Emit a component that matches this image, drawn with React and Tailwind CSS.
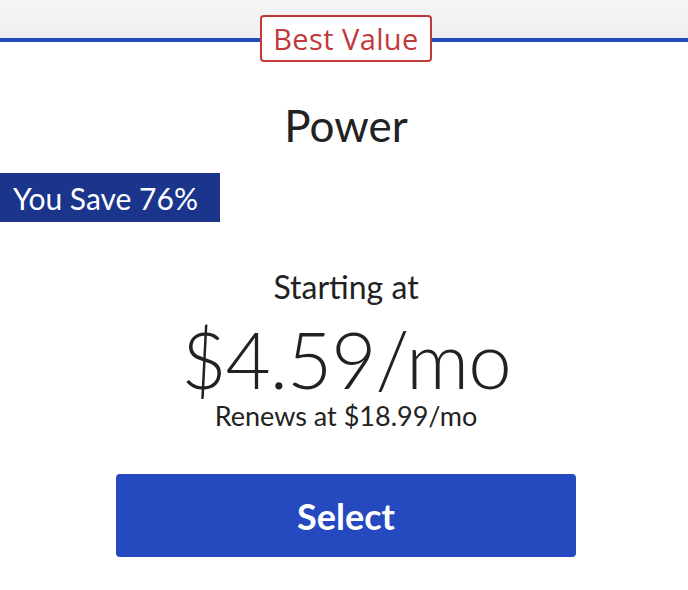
export default function App() {
  return (
    <div className="w-[688px] h-[590px] bg-white overflow-hidden text-[#222222]" style={{ fontFamily: "Lato, 'Open Sans', sans-serif" }}>
      <div className="h-[38px] bg-gradient-to-b from-[#f5f5f5] to-[#efefef]" />
      <div className="relative border-t-4 border-[#2549be]">
        <div className="absolute left-[260px] top-[-27px] h-[47px] w-[172px] flex items-center justify-center bg-white border-2 border-[#c0393b] rounded-[4px] text-[#c0393b] text-[29px] tracking-[0.4px] leading-none" style={{ fontFamily: "'Open Sans', Lato, sans-serif" }}>
          Best Value
        </div>
        <div className="flex flex-col">
          <div className="pt-[61px] pl-[4px] text-center text-[44px] leading-none">Power</div>
          <div className="mt-[26px] self-start w-[220px] h-[49px] bg-[#1c358c] text-white text-[30px] flex items-center pl-[13px] leading-none">
            You Save 76%
          </div>
          <div className="mt-[49px] pl-[4px] text-center text-[32px] leading-none">Starting at</div>
          <div className="mt-[21px] pl-[4px] text-center text-[78px] leading-[70px] font-light tracking-[-1px]">$4.59/mo</div>
          <div className="mt-[8px] pl-[4px] text-center text-[27px] leading-none">Renews at $18.99/mo</div>
          <div className="mt-[45px] ml-[116px] w-[460px] h-[83px] bg-[#2549be] rounded-[4px] flex items-center justify-center text-white text-[36px] font-bold leading-none">
            Select
          </div>
        </div>
      </div>
    </div>
  );
}
